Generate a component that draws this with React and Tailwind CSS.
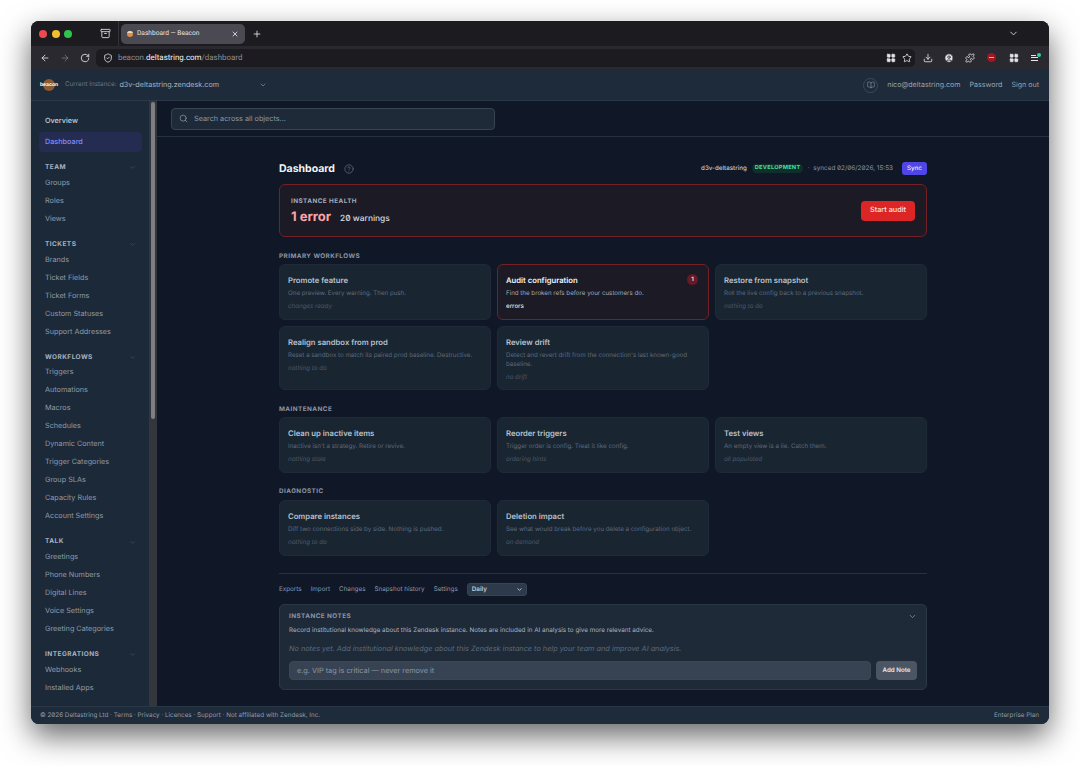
import React from "react";
import { ArrowLeft, ArrowRight, RotateCw, ShieldCheck, Star, Download, CircleUser, Puzzle, LayoutGrid, ChevronDown, X, Plus, Search, BookOpen, CircleHelp, Archive } from "lucide-react";

const groups = [
  ["TEAM", ["Groups", "Roles", "Views"]],
  ["TICKETS", ["Brands", "Ticket Fields", "Ticket Forms", "Custom Statuses", "Support Addresses"]],
  ["WORKFLOWS", ["Triggers", "Automations", "Macros", "Schedules", "Dynamic Content", "Trigger Categories", "Group SLAs", "Capacity Rules", "Account Settings"]],
  ["TALK", ["Greetings", "Phone Numbers", "Digital Lines", "Voice Settings", "Greeting Categories"]],
  ["INTEGRATIONS", ["Webhooks", "Installed Apps"]],
];

function Card({ title, desc, status, alert, tall }) {
  return (
    <div className={`relative rounded-[6px] border px-[8px] pt-[9.5px] ${tall ? "h-[64px]" : "h-[56px]"} ${alert ? "border-[#742026] bg-[#1c1a25]" : "border-[#1e2a38] bg-[#1a2532]"}`}>
      <div className={`text-[7.7px] font-semibold leading-[11px] ${alert ? "text-[#f1f5f9]" : "text-[#b8c1cd]"}`}>{title}</div>
      <div className={`mt-[3px] text-[6.2px] leading-[9.5px] ${alert ? "text-[#a3adba]" : "text-[#5f6b7b]"}`}>{desc}</div>
      <div className={`mt-[3.5px] text-[6.2px] leading-[10px] ${alert ? "font-medium text-[#dfe4ea]" : "italic text-[#4d5968]"}`}>{status}</div>
      {alert && <span className="absolute right-[10px] top-[9px] flex h-[11px] w-[11px] items-center justify-center rounded-full bg-[#651a24] text-[6px] font-bold text-[#fecaca]">1</span>}
    </div>
  );
}

function Label({ children, className = "" }) {
  return <div className={`text-[6.35px] font-bold leading-[9px] tracking-[0.07em] text-[#8b96a6] ${className}`}>{children}</div>;
}

export default function App() {
  return (
    <div className="h-[766px] w-[1080px] overflow-hidden bg-white pl-[31px] pt-[21px] font-['Inter',sans-serif] [text-rendering:geometricPrecision] [font-feature-settings:'zero']">
      <div className="flex h-[703px] w-[1018px] flex-col overflow-hidden rounded-[8px] bg-[#101827] shadow-[0_12px_30px_rgba(0,0,0,0.6)]">
        {/* tab strip */}
        <div className="flex h-[25px] shrink-0 items-center bg-[#1c1b20] pl-[8px] pr-[30px]">
          <div className="flex gap-[4.5px]">
            <span className="h-[8px] w-[8px] rounded-full bg-[#ec4a4f]" />
            <span className="h-[8px] w-[8px] rounded-full bg-[#f4bd2f]" />
            <span className="h-[8px] w-[8px] rounded-full bg-[#2cc64b]" />
          </div>
          <Archive className="ml-[28px] h-[11px] w-[11px] text-[#d6d6d8]" strokeWidth={2} />
          <div className="ml-[7px] h-[25px] w-px bg-[#34333a]" />
          <div className="ml-[2px] flex h-[20px] w-[124px] items-center rounded-[5px] bg-[#4b4a52] pl-[6px] pr-[6px]">
            <span className="flex h-[6px] w-[6px] flex-col overflow-hidden rounded-full bg-[#d98f4e]"><span className="h-[2.5px] bg-[#eed9b8]" /></span>
            <span className="ml-[4px] font-['Roboto',sans-serif] text-[6.6px] text-[#e6e6e8]">Dashboard — Beacon</span>
            <X className="ml-auto h-[8px] w-[8px] text-[#e6e6e8]" strokeWidth={2.5} />
          </div>
          <Plus className="ml-[7px] h-[10px] w-[10px] text-[#e6e6e8]" strokeWidth={2} />
          <ChevronDown className="ml-auto h-[11px] w-[11px] text-[#d6d6d8]" strokeWidth={2} />
        </div>
        {/* address bar */}
        <div className="flex h-[23px] shrink-0 items-center bg-[#2a292f] pl-[9px] pr-[9px]">
          <ArrowLeft className="h-[10px] w-[10px] text-[#e6e6e8]" strokeWidth={2} />
          <ArrowRight className="ml-[10px] h-[10px] w-[10px] text-[#77767c]" strokeWidth={2} />
          <RotateCw className="ml-[10px] h-[10px] w-[10px] text-[#e6e6e8]" strokeWidth={2} />
          <div className="ml-[6px] flex h-[18px] w-[820px] items-center rounded-[5px] bg-[#1c1b20] pl-[7px] pr-[3px]">
            <ShieldCheck className="h-[10px] w-[10px] text-[#e6e6e8]" strokeWidth={2} />
            <span className="ml-[5px] font-['Roboto',sans-serif] text-[7.95px] text-[#8e8d93]">beacon.<span className="text-[#f3f3f4]">deltastring.com</span>/dashboard</span>
            <LayoutGrid className="ml-auto h-[10px] w-[10px] fill-[#e6e6e8] text-[#e6e6e8]" strokeWidth={1.5} />
            <Star className="ml-[6px] h-[10px] w-[10px] text-[#e6e6e8]" strokeWidth={2} />
          </div>
          <Download className="ml-[8px] h-[10px] w-[10px] text-[#e6e6e8]" strokeWidth={2} />
          <CircleUser className="ml-[11px] h-[10px] w-[10px] fill-[#e6e6e8] text-[#2a292f]" strokeWidth={2} />
          <Puzzle className="ml-[11px] h-[10px] w-[10px] text-[#e6e6e8]" strokeWidth={2} />
          <span className="ml-[12px] flex h-[9px] w-[9px] items-center justify-center rounded-full bg-[#a11722]"><span className="h-[1.5px] w-[5px] bg-[#eeb0b5]" /></span>
          <LayoutGrid className="ml-[13px] h-[10px] w-[10px] fill-[#e6e6e8] text-[#e6e6e8]" strokeWidth={1.5} />
          <span className="relative ml-[12px] flex h-[10px] w-[9px] flex-col justify-center gap-[1.5px]">
            <span className="h-[1px] w-[5px] bg-[#e6e6e8]" />
            <span className="h-[1px] w-[7px] bg-[#e6e6e8]" />
            <span className="h-[1px] w-[7px] bg-[#e6e6e8]" />
            <span className="absolute -right-[1px] top-[0px] h-[4px] w-[4px] rounded-full bg-[#34d399]" />
          </span>
        </div>
        {/* app header */}
        <div className="flex h-[32px] shrink-0 items-center border-b border-[#2a3747] bg-[#1e2b3a] pl-[9px] pr-[10px] pt-px">
          <div className="relative flex h-[13px] w-[18px] items-center justify-center">
            <span className="absolute left-[3px] h-[12px] w-[12px] rounded-full bg-[#8a5a33]" />
            <span className="relative text-[5px] font-bold leading-none text-white">beacon</span>
          </div>
          <span className="ml-[7px] text-[6.3px] text-[#6b7787]">Current Instance:</span>
          <span className="ml-[3px] text-[7.2px] text-[#a9b3c0]">d3v-deltastring.zendesk.com</span>
          <ChevronDown className="ml-[40px] h-[8px] w-[8px] text-[#8b96a6]" strokeWidth={2} />
          <span className="ml-auto flex h-[15px] w-[15px] items-center justify-center rounded-full border border-[#3d4a5b]">
            <BookOpen className="h-[8px] w-[8px] text-[#8b96a6]" strokeWidth={1.8} />
          </span>
          <span className="ml-[9px] text-[7.1px] text-[#97a2b0]">nico@deltastring.com</span>
          <span className="ml-[9px] text-[7.1px] text-[#97a2b0]">Password</span>
          <span className="ml-[9px] text-[7.1px] text-[#97a2b0]">Sign out</span>
        </div>
        {/* body */}
        <div className="flex min-h-0 flex-1">
          <aside className="flex w-[126px] shrink-0 overflow-hidden bg-[#1c2938]">
            <div className="w-[118px] shrink-0 pl-[8px] pr-[7px] pt-[10px]">
              <div className="flex h-[20px] items-center pl-[6px] text-[7.25px] font-medium text-[#cbd3dd]">Overview</div>
              <div className="mt-px flex h-[20px] items-center rounded-[4px] bg-[#242c52] pl-[6px] text-[7.25px] font-medium text-[#818cf8]">Dashboard</div>
              {groups.map(([name, items]) => (
                <div key={name} className="mt-[8.8px]">
                  <div className="flex h-[14px] items-center justify-between pl-[6px] pr-[6px]">
                    <span className="text-[6.5px] font-bold tracking-[0.07em] text-[#a9b3c0]">{name}</span>
                    <ChevronDown className="h-[7px] w-[7px] text-[#4f5c6c]" strokeWidth={2} />
                  </div>
                  {items.map((i) => (
                    <div key={i} className="flex h-[18px] items-center pb-px pl-[6px] text-[7.25px] text-[#8f9aa8]">{i}</div>
                  ))}
                </div>
              ))}
            </div>
            <div className="relative w-[8px] shrink-0 bg-[#33373d]">
              <span className="absolute left-[2px] top-[1px] h-[317px] w-[4px] rounded-full bg-[#7d7f82]" />
            </div>
          </aside>
          <main className="min-w-0 flex-1 overflow-hidden">
            <div className="flex h-[36px] items-center border-b border-[#263141] pl-[14px]">
              <div className="flex h-[22px] w-[324px] items-center rounded-[4px] border border-[#374454] bg-[#1e2a38] pl-[7px]">
                <Search className="h-[9px] w-[9px] text-[#8b96a6]" strokeWidth={2} />
                <span className="ml-[6px] mt-[2px] text-[7.25px] text-[#8b96a6]">Search across all objects...</span>
              </div>
            </div>
            <div className="mx-auto w-[648px]">
              <div className="mt-[22px] flex h-[19px] items-center">
                <h1 className="text-[10.5px] font-bold text-[#f1f5f9]">Dashboard</h1>
                <CircleHelp className="ml-[9px] h-[10px] w-[10px] text-[#6b7787]" strokeWidth={1.6} />
                <span className="ml-auto text-[6.2px] font-medium text-[#c2cad4]">d3v-deltastring</span>
                <span className="ml-[5px] rounded-full bg-[#0f2f2a] px-[3px] py-[1px] text-[5.6px] font-bold leading-[7px] tracking-[0.05em] text-[#4ade9f]">DEVELOPMENT</span>
                <span className="ml-[4px] text-[6.4px] text-[#8b96a6]">·</span>
                <span className="ml-[4px] text-[6.4px] text-[#8b96a6]">synced 02/06/2026, 15:53</span>
                <span className="ml-[9px] flex h-[13px] w-[25px] items-center justify-center rounded-[3px] bg-[#4f46e5] text-[6.2px] font-medium text-[#e8e9ff]">Sync</span>
              </div>
              <div className="mt-[6px] flex h-[53px] items-center rounded-[6px] border border-[#742026] bg-[#1c1a25] pl-[11px] pr-[11px]">
                <div className="mt-[2px]">
                  <Label className="text-[#a4adba]">INSTANCE HEALTH</Label>
                  <div className="mt-[2.5px] flex items-baseline">
                    <span className="text-[13px] font-bold leading-[17px] text-[#fca5a5]">1 error</span>
                    <span className="ml-[9px] text-[8.4px] font-medium text-[#d5dae1]">20 warnings</span>
                  </div>
                </div>
                <span className="ml-auto flex h-[20px] w-[54px] items-center justify-center rounded-[4px] bg-[#dc2626] text-[7.3px] font-medium text-[#fee2e2]">Start audit</span>
              </div>
              <Label className="mt-[15px]">PRIMARY WORKFLOWS</Label>
              <div className="mt-[3px] grid grid-cols-3 gap-[6px]">
                <Card title="Promote feature" desc="One preview. Every warning. Then push." status="changes ready" />
                <Card alert title="Audit configuration" desc="Find the broken refs before your customers do." status="errors" />
                <Card title="Restore from snapshot" desc="Roll the live config back to a previous snapshot." status="nothing to do" />
                <Card tall title="Realign sandbox from prod" desc="Reset a sandbox to match its paired prod baseline. Destructive." status="nothing to do" />
                <Card tall title="Review drift" desc="Detect and revert drift from the connection's last known-good baseline." status="no drift" />
              </div>
              <Label className="mt-[15px]">MAINTENANCE</Label>
              <div className="mt-[3px] grid grid-cols-3 gap-[6px]">
                <Card title="Clean up inactive items" desc="Inactive isn't a strategy. Retire or revive." status="nothing stale" />
                <Card title="Reorder triggers" desc="Trigger order is config. Treat it like config." status="ordering hints" />
                <Card title="Test views" desc="An empty view is a lie. Catch them." status="all populated" />
              </div>
              <Label className="mt-[14px]">DIAGNOSTIC</Label>
              <div className="mt-[4px] grid grid-cols-3 gap-[6px]">
                <Card title="Compare instances" desc="Diff two connections side by side. Nothing is pushed." status="nothing to do" />
                <Card title="Deletion impact" desc="See what would break before you delete a configuration object." status="on demand" />
              </div>
              <div className="mt-[17px] border-t border-[#263141]" />
              <div className="mt-[9px] flex h-[13px] items-center gap-[9px] text-[6.3px] text-[#8b96a6]">
                <span>Exports</span><span>Import</span><span>Changes</span><span>Snapshot history</span><span>Settings</span>
                <span className="flex h-[13px] w-[60px] items-center justify-between rounded-[3px] border border-[#374454] bg-[#2c3a4b] pl-[4px] pr-[3px] font-semibold text-[#c2cad4]">Daily<ChevronDown className="h-[7px] w-[7px]" strokeWidth={3} /></span>
              </div>
              <div className="mt-[8px] h-[86px] rounded-[5px] border border-[#2a3747] bg-[#1e2a38] px-[9px] pt-[7px]">
                <div className="flex items-center justify-between">
                  <Label className="text-[#6b7787]">INSTANCE NOTES</Label>
                  <ChevronDown className="h-[9px] w-[9px] text-[#8b96a6]" strokeWidth={2} />
                </div>
                <div className="mt-[5px] text-[6.3px] leading-[9px] text-[#a9b3c0]">Record institutional knowledge about this Zendesk instance. Notes are included in AI analysis to give more relevant advice.</div>
                <div className="mt-[8px] text-[7.3px] italic leading-[11px] text-[#5f6b7b]">No notes yet. Add institutional knowledge about this Zendesk instance to help your team and improve AI analysis.</div>
                <div className="mt-[7px] flex gap-[5px]">
                  <div className="flex h-[19px] flex-1 items-center rounded-[4px] border border-[#3b4757] bg-[#374353] pl-[7px] pt-[2px] text-[7.3px] text-[#8b96a6]">e.g. VIP tag is critical — never remove it</div>
                  <span className="flex h-[19px] w-[41px] items-center justify-center rounded-[4px] bg-[#4b5563] text-[6.2px] font-semibold text-[#e5e7eb]">Add Note</span>
                </div>
              </div>
            </div>
          </main>
        </div>
        {/* footer */}
        <div className="flex h-[18px] shrink-0 items-center justify-between border-t border-[#2a3747] bg-[#1e2b3a] pl-[9px] pr-[10px] text-[6.3px] text-[#8f9aa8]">
          <span>© 2026 Deltastring Ltd · Terms · Privacy · Licences · Support · Not affiliated with Zendesk, Inc.</span>
          <span>Enterprise Plan</span>
        </div>
      </div>
    </div>
  );
}
